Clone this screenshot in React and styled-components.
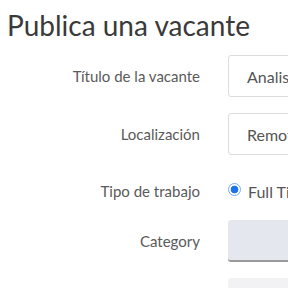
import React from "react";
import styled, { createGlobalStyle } from "styled-components";

const Global = createGlobalStyle`
  html, body {
    margin: 0;
    background: #fff;
    overflow: hidden;
  }
  body {
    font-family: Lato, "Liberation Sans", sans-serif;
  }
`;

const Page = styled.div`
  width: 288px;
  height: 288px;
  overflow: hidden;
  padding-left: 7px;
  box-sizing: border-box;
`;

const Title = styled.h1`
  margin: 0;
  padding-top: 9px;
  font-size: 28px;
  font-weight: 400;
  color: #3a3a3a;
  line-height: 32px;
  white-space: nowrap;
`;

const Form = styled.div`
  display: grid;
  grid-template-columns: 193px 260px;
  column-gap: 28px;
  row-gap: 16px;
  margin-top: 14px;
`;

const Label = styled.div`
  display: flex;
  align-items: center;
  justify-content: flex-end;
  font-size: 15px;
  color: #5a5a5a;
  white-space: nowrap;
  padding-top: ${(p) => p.$shift || 0}px;
`;

const Input = styled.div`
  height: 42px;
  box-sizing: border-box;
  border: 1px solid #dcdcdc;
  border-radius: 3px;
  padding-left: 18px;
  display: flex;
  align-items: center;
  font-size: 16px;
  color: #555;
  white-space: nowrap;
`;

const RadioRow = styled.div`
  height: 33px;
  display: flex;
  align-items: center;
  gap: 7px;
  padding-top: 7px;
  box-sizing: border-box;
  font-size: 16px;
  color: #555;
  white-space: nowrap;
`;

const Radio = styled.span`
  width: 13px;
  height: 13px;
  border-radius: 50%;
  box-sizing: border-box;
  border: 1px solid #7aa9ef;
  background: radial-gradient(circle, #1a73e8 0 3.5px, #fff 4.2px);
  margin-top: -4px;
`;

const Select = styled.div`
  height: 42px;
  box-sizing: border-box;
  background: ${(p) => (p.$light ? "#f2f2f4" : "#e4e7ee")};
  border-radius: 3px;
  border-bottom: ${(p) => (p.$light ? "none" : "2px solid #9a9a9a")};
`;

export default function App() {
  return (
    <Page>
      <Global />
      <Title>Publica una vacante</Title>
      <Form>
        <Label>Título de la vacante</Label>
        <Input>Analista</Input>
        <Label>Localización</Label>
        <Input>Remoto</Input>
        <Label $shift={7}>Tipo de trabajo</Label>
        <RadioRow>
          <Radio />
          Full Time
        </RadioRow>
        <Label>Category</Label>
        <Select />
        <div />
        <Select $light />
      </Form>
    </Page>
  );
}
